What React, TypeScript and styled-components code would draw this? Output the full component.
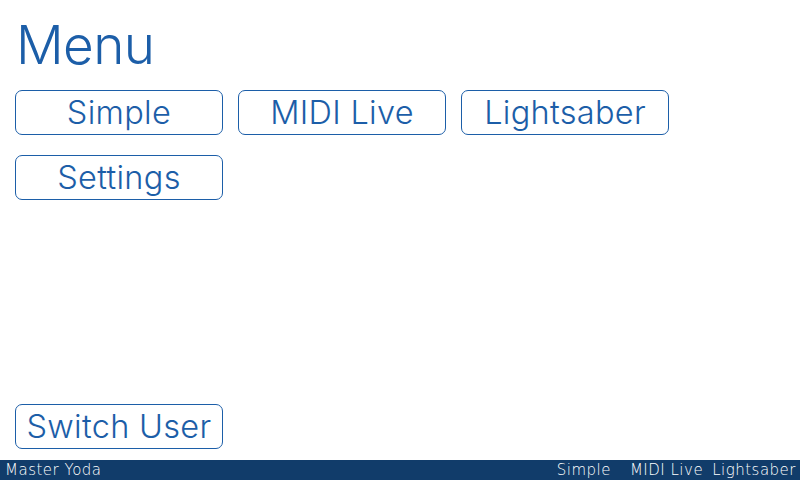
import React from "react";
import styled, { createGlobalStyle } from "styled-components";

const Global = createGlobalStyle`
  html, body { margin: 0; padding: 0; background: #fff; }
  #root { width: 800px; height: 480px; }
`;

const Screen = styled.div`
  width: 800px;
  height: 480px;
  display: flex;
  flex-direction: column;
  font-family: Inter, "Liberation Sans", sans-serif;
  color: #1c5ea8;
  overflow: hidden;
`;

const Main = styled.div`
  flex: 1;
  display: flex;
  flex-direction: column;
  padding: 13px 15px 11px 15px;
`;

const Title = styled.h1`
  margin: 0 0 0 1px;
  font-size: 53px;
  font-weight: 300;
  line-height: 64px;
  letter-spacing: -0.6px;
`;

const Grid = styled.div`
  display: grid;
  grid-template-columns: repeat(3, 208px);
  column-gap: 15px;
  row-gap: 20px;
  margin-top: 13px;
`;

const Button = styled.button`
  width: 208px;
  height: 45px;
  box-sizing: border-box;
  border: 1px solid #1c5ea8;
  border-radius: 7px;
  background: #fff;
  color: #1c5ea8;
  font-family: Inter, "Liberation Sans", sans-serif;
  font-weight: 300;
  font-size: 32.5px;
  letter-spacing: 0.3px;
  padding: 0;
  display: flex;
  align-items: center;
  justify-content: center;
`;

const Spacer = styled.div`
  flex: 1;
`;

const StatusBar = styled.div`
  height: 20px;
  background: #113c6a;
  color: #fff;
  display: flex;
  align-items: center;
  padding: 0 4px 0 5px;
  font-family: "DejaVu Sans", sans-serif;
  font-size: 15px;
  font-weight: 300;
  letter-spacing: 0.5px;
`;

const StatusRight = styled.div`
  margin-left: auto;
  display: flex;
  gap: 9px;
`;

const StatusItem = styled.span<{ $gap?: number }>`
  margin-right: ${(p) => p.$gap ?? 0}px;
`;

export default function App() {
  return (
    <>
      <Global />
      <Screen>
        <Main>
          <Title>Menu</Title>
          <Grid>
            <Button>Simple</Button>
            <Button>MIDI Live</Button>
            <Button>Lightsaber</Button>
            <Button>Settings</Button>
          </Grid>
          <Spacer />
          <Button>Switch User</Button>
        </Main>
        <StatusBar>
          <span>Master Yoda</span>
          <StatusRight>
            <StatusItem $gap={10}>Simple</StatusItem>
            <StatusItem>MIDI Live</StatusItem>
            <StatusItem>Lightsaber</StatusItem>
          </StatusRight>
        </StatusBar>
      </Screen>
    </>
  );
}
